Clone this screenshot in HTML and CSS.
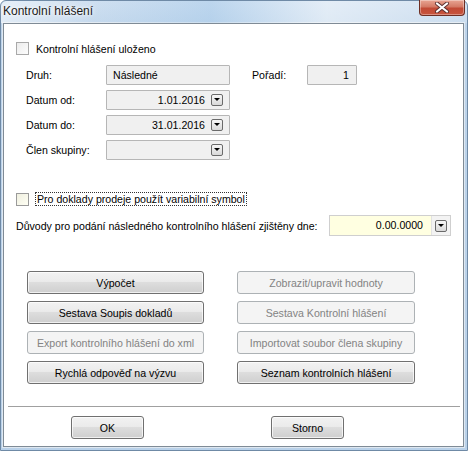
FILE: index.html
```html
<!DOCTYPE html>
<html>
<head>
<meta charset="utf-8">
<link rel="stylesheet" href="styles.css">
</head>
<body>
<div class="window">
  <div class="titlebar">
    <span class="title">Kontrolní hlášení</span>
    <div class="close"><svg width="16" height="11" viewBox="0 0 16 11"><path d="M3 1.5 L13 9.5 M13 1.5 L3 9.5" stroke="#5a3030" stroke-width="4" stroke-linecap="round"/><path d="M3 1.5 L13 9.5 M13 1.5 L3 9.5" stroke="#ffffff" stroke-width="2.2" stroke-linecap="round"/></svg></div>
  </div>
  <div class="client">
    <label class="check-row first">
      <span class="box"></span><span>Kontrolní hlášení uloženo</span>
    </label>
    <div class="form">
      <div class="row">
        <span class="lbl">Druh:</span>
        <div class="field"><span class="val left">Následné</span></div>
        <span class="lbl lbl2">Pořadí:</span>
        <div class="field small"><span class="val">1</span></div>
      </div>
      <div class="row">
        <span class="lbl">Datum od:</span>
        <div class="field"><span class="val">1.01.2016</span><span class="dd"></span></div>
      </div>
      <div class="row">
        <span class="lbl">Datum do:</span>
        <div class="field"><span class="val">31.01.2016</span><span class="dd"></span></div>
      </div>
      <div class="row">
        <span class="lbl">Člen skupiny:</span>
        <div class="field"><span class="val"></span><span class="dd"></span></div>
      </div>
    </div>
    <label class="check-row second">
      <span class="box yellow"></span><span class="focus">Pro doklady prodeje použít variabilní symbol</span>
    </label>
    <div class="reason">
      <span class="rlabel">Důvody pro podání následného kontrolního hlášení zjištěny dne:</span>
      <div class="rfield"><span class="rval">0.00.0000</span><span class="rbtn"><span class="dd"></span></span></div>
    </div>
    <div class="buttons">
      <button class="btn">Výpočet</button>
      <button class="btn dis">Zobrazit/upravit hodnoty</button>
      <button class="btn">Sestava Soupis dokladů</button>
      <button class="btn dis">Sestava Kontrolní hlášení</button>
      <button class="btn dis">Export kontrolního hlášení do xml</button>
      <button class="btn dis">Importovat soubor člena skupiny</button>
      <button class="btn">Rychlá odpověď na výzvu</button>
      <button class="btn">Seznam kontrolních hlášení</button>
    </div>
    <div class="sep"></div>
    <div class="footer">
      <button class="btn small">OK</button>
      <button class="btn small">Storno</button>
    </div>
  </div>
</div>
</body>
</html>
```
FILE: styles.css
```css
* { box-sizing: border-box; }
html, body { margin: 0; padding: 0; }
body { width: 468px; height: 451px; overflow: hidden; font-family: "Liberation Sans", Arial, sans-serif; font-size: 10.6px; color: #000; }
.window {
  width: 468px; height: 451px;
  background: linear-gradient(180deg, #c9dcef 0%, #bcd3ea 6%, #b9d1e9 100%);
  border: 1px solid #6f8aa6;
  border-radius: 6px 6px 0 0;
  display: flex; flex-direction: column;
}
.titlebar {
  height: 22px; position: relative;
  background: linear-gradient(90deg, rgba(255,255,255,0.55) 0%, rgba(255,255,255,0.1) 20%, rgba(160,200,235,0.3) 45%, rgba(255,255,255,0.5) 70%, rgba(255,255,255,0.2) 100%);
  border-radius: 6px 6px 0 0;
}
.title { position: absolute; left: 2px; top: 3px; font-size: 12px; color: #1a1a1a; text-shadow: 0 0 6px #fff, 0 0 3px #fff; }
.close {
  position: absolute; left: 418px; top: -1px; width: 46px; height: 16px;
  background: linear-gradient(180deg, #e8a593 0%, #d47a66 45%, #c14a35 55%, #c8553e 100%);
  border: 1px solid #6e2e23; border-top: none; border-radius: 0 0 4px 4px;
  display: flex; align-items: center; justify-content: center;
  box-shadow: inset 0 0 0 1px rgba(255,255,255,0.35);
}
.client {
  margin: 0 3px 3px 2px;
  flex: 1;
  background: #fff;
  border: 1px solid #7f8b96;
  box-shadow: 0 0 0 1px #dfe8f1;
  padding: 0 0 0 12px;
}
.check-row { display: flex; align-items: center; gap: 7px; }
.check-row.first { margin-top: 18px; height: 13px; }
.box { width: 13px; height: 13px; border: 1px solid #a9a9a9; background: linear-gradient(135deg, #ececec, #fdfdfd); }
.box.yellow { background: linear-gradient(135deg, #efefe0, #fffff4); border-color: #9a9a9a; }
.form { margin-top: 10px; display: flex; flex-direction: column; gap: 5px; padding-left: 10px; }
.row { display: flex; align-items: center; height: 20px; }
.lbl { width: 80px; }
.lbl2 { width: 55px; margin-left: 22px; }
.field {
  width: 124px; height: 20px; border: 1px solid #b6b6b6; background: #f0f0f0; border-radius: 1px;
  display: flex; align-items: center; padding: 0 6px 0 6px;
}
.field.small { width: 50px; }
.val { flex: 1; text-align: right; padding-right: 6px; }
.field.small .val { padding-right: 1px; }
.val.left { text-align: left; }
.dd {
  width: 12px; height: 12px; border: 1px solid #6a6a6a; border-radius: 2px;
  background: linear-gradient(180deg, #f6f6f6, #d9d9d9);
  position: relative; flex: none;
}
.dd::after {
  content: ""; position: absolute; left: 2px; top: 3px;
  border-left: 3px solid transparent; border-right: 3px solid transparent; border-top: 3px solid #000;
}
.check-row.second { margin-top: 32px; height: 14px; }
.focus { outline: 1px dotted #333; outline-offset: 0px; padding: 0 1px; }
.reason { display: flex; align-items: center; margin-top: 9px; height: 21px; }
.rlabel { width: 313px; }
.rfield { width: 122px; height: 21px; border: 1px solid #cfcfcf; display: flex; background: #f3f3f3; }
.rval { width: 101px; background: #ffffe1; text-align: right; padding-right: 8px; line-height: 19px; }
.rbtn { flex: 1; display: flex; align-items: center; justify-content: center; border-left: 1px solid #e2e2e2; }
.buttons {
  margin-top: 35px; margin-left: 11px;
  display: grid; grid-template-columns: 177px 178px; column-gap: 33px; row-gap: 7px;
}
.btn {
  font: inherit; font-weight: normal; color: #000; height: 23px; padding: 0;
  border: 1px solid #707070; border-radius: 3px;
  background: linear-gradient(180deg, #f2f2f2 0%, #ebebeb 45%, #dddddd 50%, #cfcfcf 100%);
  box-shadow: inset 0 0 0 1px rgba(255,255,255,0.7);
}
.btn.dis { background: #f4f4f4; border-color: #adb2b5; color: #838383; box-shadow: none; }
.sep { margin: 22px 0 0 -8px; width: 452px; height: 1px; background: #a0a0a0; }
.footer { display: flex; margin-top: 9px; padding-left: 55px; gap: 127px; }
.btn.small { width: 73px; }
```
